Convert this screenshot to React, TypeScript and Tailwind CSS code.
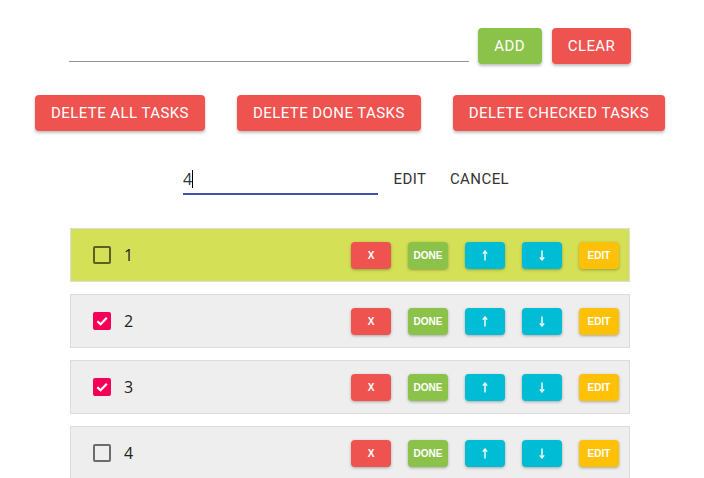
import React from "react";

const roboto = { fontFamily: "Roboto, 'Liberation Sans', sans-serif" };

function Check({ checked, dark }: { checked: boolean; dark?: boolean }) {
  if (checked) {
    return (
      <div className="w-[18px] h-[18px] rounded-[2px] bg-[#f50057] flex items-center justify-center">
        <svg width="14" height="14" viewBox="0 0 14 14">
          <path d="M2.3 7.2 L5.6 10.3 L11.8 3.8" fill="none" stroke="white" strokeWidth="2.2" />
        </svg>
      </div>
    );
  }
  return <div className={"w-[18px] h-[18px] rounded-[2px] border-2 " + (dark ? "border-[#5c5f22]" : "border-[#6b6b6b]")} />;
}

function Arrow({ up }: { up: boolean }) {
  return (
    <svg width="8" height="11" viewBox="0 0 8 11" className={up ? "" : "rotate-180"}>
      <path d="M4 10.5 V1.5" stroke="white" strokeWidth="1.4" />
      <path d="M1.8 3.6 L4 1 L6.2 3.6" fill="none" stroke="white" strokeWidth="1.3" />
    </svg>
  );
}

function SmallBtn({ label, color }: { label: React.ReactNode; color: string }) {
  return (
    <button
      className={"w-[40px] h-[27px] rounded-[4px] text-white text-[10px] font-bold flex items-center justify-center shadow-[0_1px_3px_rgba(0,0,0,0.3)] " + color}
      style={{ fontFamily: "'Liberation Sans', Arial, sans-serif" }}
    >
      {label}
    </button>
  );
}

function Row({ n, checked, highlight }: { n: number; checked: boolean; highlight?: boolean }) {
  return (
    <div
      className={
        "h-[54px] border border-[#dcdcdc] flex items-center pl-[22px] pr-[10px] " +
        (highlight ? "bg-[#d4e157]" : "bg-[#eeeeee]")
      }
    >
      <Check checked={checked} dark={highlight} />
      <span className="ml-[13px] text-[16px] text-[#222]" style={{ fontFamily: "'Open Sans', 'Noto Sans', sans-serif" }}>
        {n}
      </span>
      <div className="ml-auto flex items-center gap-[17px]">
        <SmallBtn label="X" color="bg-[#ef5350]" />
        <SmallBtn label="DONE" color="bg-[#8bc34a]" />
        <SmallBtn label={<Arrow up />} color="bg-[#00bcd4]" />
        <SmallBtn label={<Arrow up={false} />} color="bg-[#00bcd4]" />
        <SmallBtn label="EDIT" color="bg-[#ffc107]" />
      </div>
    </div>
  );
}

export default function App() {
  const btn =
    "h-9 min-w-[64px] px-4 rounded-[4px] text-white text-[15px] font-normal uppercase tracking-[0.02857em] shadow-[0_2px_3px_rgba(0,0,0,0.25)]";
  return (
    <div className="w-[700px] bg-white min-h-[478px] pt-[28px]" style={roboto}>
      <div className="flex justify-center items-start">
        <div className="w-[400px] h-[34px] border-b border-[#949494]" />
        <button className={btn + " ml-[9px] bg-[#8bc34a]"}>Add</button>
        <button className={btn + " ml-[10px] bg-[#ef5350]"}>Clear</button>
      </div>
      <div className="flex justify-center gap-[32px] mt-[31px]">
        <button className={btn + " bg-[#ef5350]"}>Delete all tasks</button>
        <button className={btn + " bg-[#ef5350]"}>Delete done tasks</button>
        <button className={btn + " bg-[#ef5350]"}>Delete checked tasks</button>
      </div>
      <div className="flex justify-center items-start mt-[30px]">
        <div className="w-[195px] h-[34px] pt-[4px] border-b-2 border-[#3f51b5] flex items-center">
          <span className="text-[16px] text-[#333]" style={{ fontFamily: "'Open Sans', 'Noto Sans', sans-serif" }}>4</span>
          <span className="w-px h-[18px] bg-black" />
        </div>
        <button className="h-9 min-w-[64px] px-2 text-[15px] text-[#333] uppercase tracking-[0.02857em]">Edit</button>
        <button className="h-9 min-w-[64px] px-2 text-[15px] text-[#333] uppercase tracking-[0.02857em]">Cancel</button>
      </div>
      <div className="w-[560px] mx-auto mt-[31px] flex flex-col gap-[12px]">
        <Row n={1} checked={false} highlight />
        <Row n={2} checked={true} />
        <Row n={3} checked={true} />
        <Row n={4} checked={false} />
      </div>
    </div>
  );
}
